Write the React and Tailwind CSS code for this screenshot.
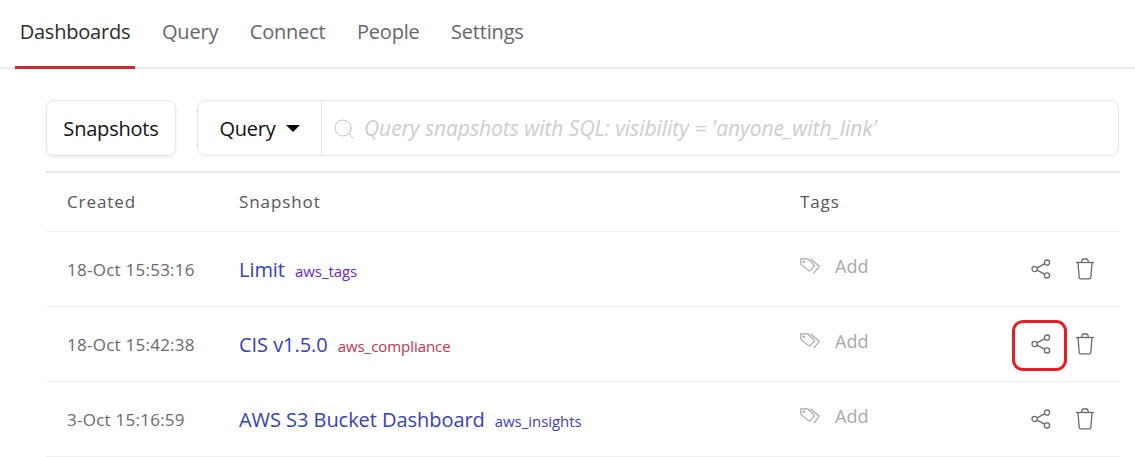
import React from "react";
import { Search } from "lucide-react";

const rows = [
  { created: "18-Oct 15:53:16", name: "Limit", mod: "aws_tags", modColor: "text-[#6a1fe0]" },
  { created: "18-Oct 15:42:38", name: "CIS v1.5.0", mod: "aws_compliance", modColor: "text-[#c8324f]", marked: true },
  { created: "3-Oct 15:16:59", name: "AWS S3 Bucket Dashboard", mod: "aws_insights", modColor: "text-[#3b40c4]" },
];

const tabs = ["Query", "Connect", "People", "Settings"];

function TagsIcon() {
  return (
    <svg width="20" height="17" viewBox="0 0 20 17" fill="none" stroke="#a9a9af" strokeWidth="1.2" strokeLinejoin="round">
      <path d="M0.7 0.8h7l6.4 6.2a1 1 0 0 1 0 1.4l-4 4.2a1 1 0 0 1-1.4 0L0.9 6.4z" />
      <path d="M10.5 0.8l8.2 7a1 1 0 0 1 0 1.4l-5 6" />
      <circle cx="3.8" cy="3.8" r="0.7" />
    </svg>
  );
}

function ShareIcon() {
  return (
    <svg width="20" height="20" viewBox="0 0 20 20" fill="none" stroke="#6b6b6b" strokeWidth="1.3">
      <circle cx="3.6" cy="10" r="2.6" />
      <circle cx="16" cy="3.6" r="2.6" />
      <circle cx="16" cy="16.4" r="2.6" />
      <path d="M6 8.8l7.6-4M6 11.2l7.6 4" />
    </svg>
  );
}

function TrashIcon() {
  return (
    <svg width="20" height="22" viewBox="0 0 20 22" fill="none" stroke="#6b6b6b" strokeWidth="1.3" strokeLinejoin="round">
      <path d="M1 4.5h18" />
      <path d="M6.5 4.5l.8-2.8a1 1 0 0 1 1-.7h3.4a1 1 0 0 1 1 .7l.8 2.8" />
      <path d="M3 4.5l1.2 15a1.5 1.5 0 0 0 1.5 1.4h8.6a1.5 1.5 0 0 0 1.5-1.4L17 4.5" />
    </svg>
  );
}

export default function App() {
  return (
    <div className="min-h-[457px] bg-white font-['Open_Sans',sans-serif] overflow-hidden">
      <div className="flex h-[69px] pl-[15px] border-b-2 border-[#ececec]">
        <div className="h-[69px] w-[120px] border-b-[3px] border-[#cf2a33] flex justify-center pt-[18px] text-[20px] leading-[28px] tracking-[-0.2px] text-[#2c2c2c]">
          Dashboards
        </div>
        <div className="flex gap-[31.5px] pl-[27px] pt-[18px] text-[20px] leading-[28px] tracking-[-0.2px] text-[#66666c]">
          {tabs.map((t) => (
            <div key={t}>{t}</div>
          ))}
        </div>
      </div>

      <div className="pl-[46px] pr-[15px] pt-[31px]">
        <div className="flex gap-[21px] h-[56px] mr-[1px]">
          <div className="w-[130px] pt-[1px] rounded-lg border border-[#e8e8ec] shadow-[0_1px_3px_rgba(0,0,0,0.1)] flex items-center justify-center text-[20px] tracking-[-0.2px] text-[#111]">
            Snapshots
          </div>
          <div className="flex-1 flex rounded-lg border border-[#e6e6ea]">
            <div className="w-[124px] pt-[1px] border-r border-[#e6e6ea] flex items-center justify-center gap-[10px] text-[20px] tracking-[-0.2px] text-[#111]">
              Query
              <span className="w-0 h-0 border-l-[7px] border-r-[7px] border-t-[7px] border-l-transparent border-r-transparent border-t-black"></span>
            </div>
            <div className="flex items-center pl-[10px] pt-[1px] gap-[8px]">
              <Search size={24} strokeWidth={1} className="text-[#c8c8c8]" />
              <span className="text-[21px] italic tracking-[-0.03px] text-[#cdcdd0]">
                Query snapshots with SQL: visibility = 'anyone_with_link'
              </span>
            </div>
          </div>
        </div>

        <div className="mt-[15px] border-t-2 border-[#e5e5ea]">
          <div className="flex items-center h-[59px] border-b border-[#f1f1f3] text-[17px] tracking-[0.9px] text-[#55555a]">
            <div className="w-[193px] pl-[21px]">Created</div>
            <div className="w-[561px] pl-0">Snapshot</div>
            <div>Tags</div>
          </div>
          {rows.map((r) => (
            <div key={r.name} className="flex items-center h-[75px] border-b border-[#f1f1f3]">
              <div className="w-[193px] pl-[21px] pt-[2px] text-[17px] tracking-[0.25px] text-[#6a6a6e]">{r.created}</div>
              <div className="w-[561px] pt-[2px] flex items-baseline gap-[10px]">
                <span className="text-[20px] tracking-[-0.05px] text-[#3440c4]">{r.name}</span>
                <span className={`text-[15px] tracking-[-0.05px] ${r.modColor}`}>{r.mod}</span>
              </div>
              <div className="flex items-center gap-[15px] -mt-[6px] text-[18px] text-[#a8a8b0]">
                <TagsIcon />
                <span>Add</span>
              </div>
              <div className="ml-auto flex items-center gap-[24px] pr-[25px]">
                <div className="relative flex">
                  <ShareIcon />
                  {r.marked && (
                    <span className="absolute -left-[19px] -top-[14px] w-[55px] h-[51px] rounded-[11px] border-[3px] border-[#ed1c24]"></span>
                  )}
                </div>
                <TrashIcon />
              </div>
            </div>
          ))}
        </div>
      </div>
    </div>
  );
}
